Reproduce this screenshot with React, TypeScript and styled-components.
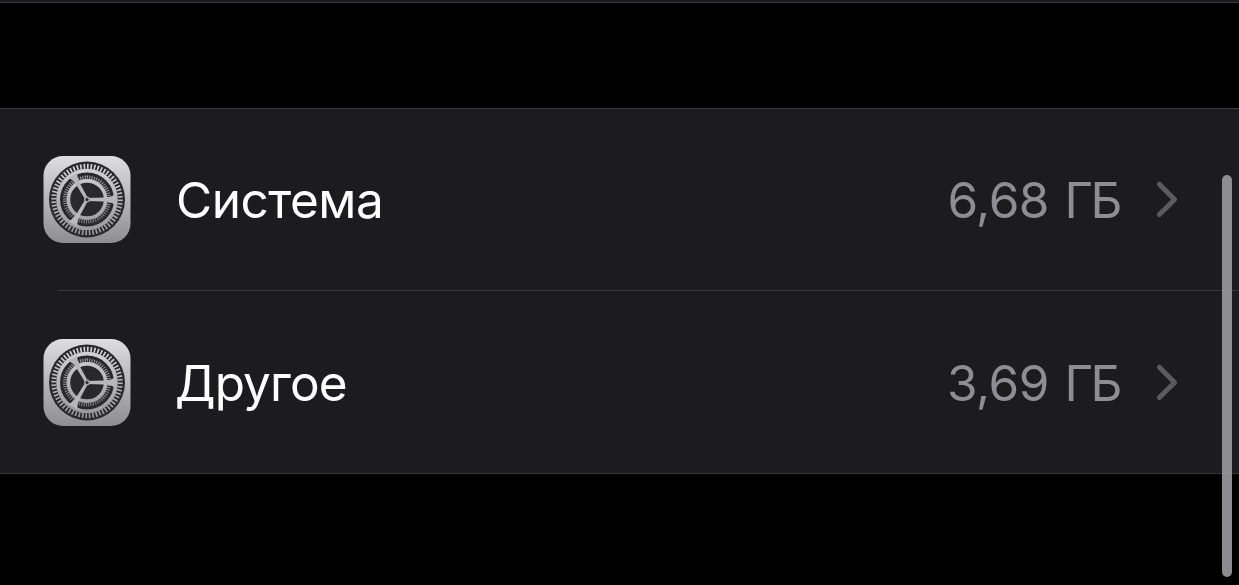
import { FC } from 'react'
import styled, { createGlobalStyle, css } from 'styled-components'

const GlobalStyle = createGlobalStyle`
  * {
    box-sizing: border-box;
  }

  body {
    margin: 0;
    background: #000;
    overflow: hidden;
  }
`

const Screen = styled.main`
  position: relative;
  height: 585px;
  overflow: hidden;
  background: #000;
  font-family: Inter, 'Liberation Sans', sans-serif;
`

const PreviousGroup = styled.div`
  height: 3px;
  background: #1c1c1e;
  border-bottom: 1px solid #3a3a3c;
`

const List = styled.ul`
  margin: 105px 0 0;
  padding: 0;
  list-style: none;
  background: #1c1c1e;
  border-top: 1px solid #3a3a3c;
  border-bottom: 1px solid #38383a;
`

const Row = styled.li<{ $last?: boolean }>`
  display: flex;
  align-items: center;
  height: ${({ $last }) => ($last ? 182 : 181)}px;
  padding: ${({ $last }) => ($last ? 2 : 1)}px 60px 0 43px;
`

const Separator = styled.li`
  height: 1px;
  margin-left: 58px;
  background: #38383a;
`

const Title = styled.span<{ $tracking: number }>`
  ${({ $tracking }) => {
    return css`
      flex: 1;
      margin-left: ${$tracking < -0.5 ? 44 : 45}px;
      color: #fff;
      font-size: 49.5px;
      line-height: 60px;
      letter-spacing: ${$tracking}px;
    `
  }}
`

const Size = styled.span`
  margin-right: 35px;
  color: #8d8d92;
  font-size: 49.5px;
  line-height: 60px;
  letter-spacing: -0.5px;
  word-spacing: 2px;
  white-space: nowrap;
`

const Unit = styled.span`
  letter-spacing: -2.5px;
`

const ScrollThumb = styled.div`
  position: absolute;
  top: 175px;
  right: 7px;
  width: 10px;
  height: 402px;
  border-radius: 5px;
  background: rgba(151, 151, 153, 0.93);
`

const Icon = styled.svg`
  display: block;
  flex: none;
`

const SPOKES = [0, 120, 240]

const GearIcon: FC<{ id: string }> = ({ id }) => {
  const fill = `url(#${id})`

  return (
    <Icon width="88" height="88" viewBox="-44 -43.5 88 88">
      <defs>
        <linearGradient
          id={id}
          gradientUnits="userSpaceOnUse"
          x1="0"
          y1="-44"
          x2="0"
          y2="44"
        >
          <stop offset="0" stopColor="#dedee2" />
          <stop offset="1" stopColor="#8e8e92" />
        </linearGradient>
      </defs>
      <rect x="-43.5" y="-43.5" width="87" height="87" rx="19.5" fill={fill} />
      <circle r="38" fill="#29292c" />
      {/* outer wheel */}
      <circle
        r="33.2"
        fill="none"
        stroke={fill}
        strokeWidth="5"
        pathLength={600}
        strokeDasharray="4.8 5.2"
      />
      <circle r="28.9" fill="none" stroke={fill} strokeWidth="3.8" />
      {/* inner wheel */}
      <circle
        r="22"
        fill="none"
        stroke={fill}
        strokeWidth="4"
        strokeOpacity="0.7"
        pathLength={600}
        strokeDasharray="4.6 5.4"
      />
      <circle r="18.6" fill="none" stroke={fill} strokeWidth="3.6" />
      {SPOKES.map((angle) => (
        <g key={angle} transform={`rotate(${angle})`}>
          <path
            d="M0 -1.4 L17 -1.9 C21 -2.1 25 -2.6 28 -5.4 V5.4 C25 2.6 21 2.1 17 1.9 L0 1.4 Z"
            fill="#b8b8bc"
          />
        </g>
      ))}
      <circle r="3" fill="#a4a4a8" />
      <circle r="1.5" fill="#29292c" />
    </Icon>
  )
}

const Chevron: FC = () => (
  <Icon width="24" height="40" viewBox="0 0 24 40">
    <path
      d="M4.4 4.2 L19.6 19.4 L4.4 34.6"
      fill="none"
      stroke="#5b5b5f"
      strokeWidth="5"
      strokeLinecap="round"
      strokeLinejoin="round"
    />
  </Icon>
)

const App: FC = () => {
  return (
    <>
      <GlobalStyle />
      <Screen>
        <PreviousGroup />
        <List>
          <Row>
            <GearIcon id="gear-system" />
            <Title $tracking={-0.5}>Система</Title>
            <Size>
              6,68 <Unit>ГБ</Unit>
            </Size>
            <Chevron />
          </Row>
          <Separator />
          <Row $last>
            <GearIcon id="gear-other" />
            <Title $tracking={-0.9}>Другое</Title>
            <Size>
              3,69 <Unit>ГБ</Unit>
            </Size>
            <Chevron />
          </Row>
        </List>
        <ScrollThumb />
      </Screen>
    </>
  )
}

export default App
